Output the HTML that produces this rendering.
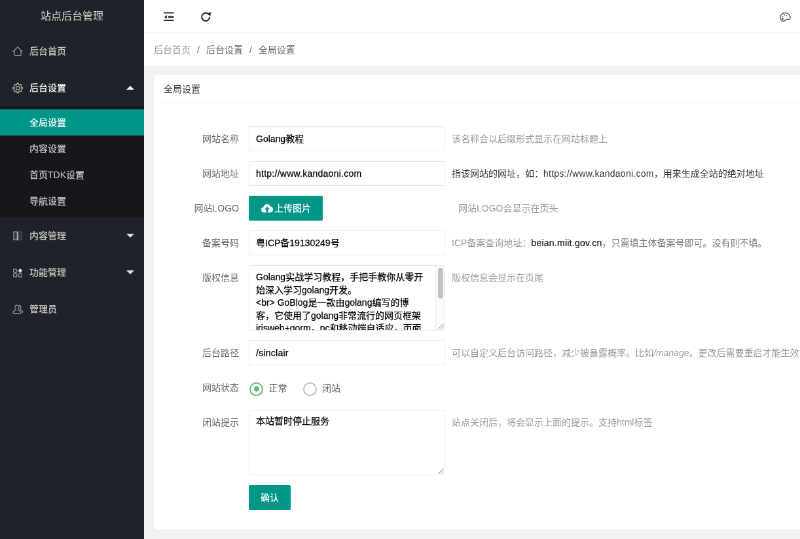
<!DOCTYPE html>
<html lang="zh-CN">
<head>
<meta charset="utf-8">
<title>站点后台管理</title>
<style>
*{box-sizing:border-box;margin:0;padding:0}
html,body{width:800px;height:539px;overflow:hidden;background:#f2f2f2}
body{font-family:"Liberation Sans","Noto Sans CJK SC",sans-serif;font-size:14px;color:#666;line-height:24px}
#app{position:absolute;left:0;top:0;width:1400px;height:824px;transform:scale(0.6547);transform-origin:0 0;background:#f2f2f2;overflow:hidden;will-change:transform}
ul{list-style:none}
.side{position:absolute;left:0;top:0;width:220px;height:824px;background:#20222A;color:#fff;font-weight:500}
.logo{font-weight:400;height:50px;line-height:50px;text-align:center;font-size:16px;color:rgba(255,255,255,.8)}
.nav>li>a{display:block;position:relative;height:56px;line-height:40px;padding:8px 30px 8px 45px;color:rgba(255,255,255,.75);font-size:14px}
.nav>li>a svg.ic{position:absolute;left:18px;top:19px;width:18px;height:18px}
.nav .more{position:absolute;right:15px;top:24.500px;width:0;height:0;border:6px solid transparent;border-top-color:rgba(255,255,255,.85)}
.nav .more.up{top:18.500px;border-top-color:transparent;border-bottom-color:rgba(255,255,255,.95)}
.nav .child{background:rgba(0,0,0,.3);padding:5px 0}
.nav .child a{display:block;height:40px;line-height:40px;padding-left:45px;color:rgba(255,255,255,.75)}
.nav .child a.this{background:#009688;color:#fff}
.nav li.ed>a{color:#fff}
.header{position:absolute;left:220px;top:0;right:0;height:50px;background:#fff;border-bottom:1px solid #f6f6f6}
.header svg{position:absolute}
.crumb{position:absolute;left:220px;right:0;top:50px;height:50px;line-height:50px;padding-left:15px;background:#fff;color:#999;border-top:1px solid #f6f6f6}
.crumb span.sep{margin:0 10px;color:#666}
.crumb .c{color:#666}
.card{position:absolute;left:235px;top:115px;right:-20px;height:694px;background:#fff;border-radius:2px;box-shadow:0 1px 2px 0 rgba(0,0,0,.05)}
.card-h{height:43px;line-height:42px;padding:0 15px;border-bottom:1px solid #f6f6f6;color:#333;font-size:14px}
.form{position:relative;padding:35px 15px 0 15px}
.item{margin-bottom:15px;min-height:38px;position:relative}
.item:after{content:"";display:block;clear:both}
.lab{float:left;width:130px;padding:9px 15px;line-height:20px;text-align:right;color:#666}
.inl{float:left;width:300px;margin-right:10px}
.inp{display:block;width:300px;height:38px;line-height:20px;padding:8px 10px;border:1px solid #e6e6e6;border-radius:2px;background:#fff;color:#000;font-size:14px;overflow:hidden;white-space:nowrap;-webkit-text-stroke:.25px #000}
.ta{height:100px;white-space:normal;line-height:20px;padding:6px 10px;position:relative}
.ta1{padding:8.300px 25px 0 10px;line-height:19.400px}
.ta1 .trk{position:absolute;right:0;top:0;bottom:0;width:14px;background:#fafafa;border-left:1px solid #ebebeb}
.lt{letter-spacing:.25px}
.mid{float:left;padding:9px 0;line-height:20px;color:#999;margin-right:10px;white-space:nowrap}
.mid b{font-weight:normal;color:#111;-webkit-text-stroke:.2px #111}
.btn{font-weight:500;display:inline-block;height:38px;line-height:38px;padding:0 18px;background:#009688;color:#fff;border-radius:2px;font-size:14px;white-space:nowrap;position:relative}
.radio{float:left;height:28px;line-height:28px;margin:6px 11px 0 0;padding-right:10px;position:relative;white-space:nowrap;color:#666}
.radio i{display:inline-block;vertical-align:middle;width:21px;height:21px;border-radius:50%;border:2.200px solid #c2c2c2;margin:0 8.500px 0 1px;position:relative;top:0}
.radio i.on{border-color:#5FB878}
.radio i.on:after{content:"";position:absolute;left:4.700px;top:4.700px;width:8px;height:8px;border-radius:50%;background:#5FB878}
.grip{position:absolute;right:1px;bottom:1px;width:10px;height:10px}
.sb{position:absolute;right:2.500px;top:2.700px;width:7.500px;height:47.500px;border-radius:4px;background:#c1c1c1}
</style>
</head>
<body>
<div id="app">
  <div class="side">
    <div class="logo">站点后台管理</div>
    <ul class="nav">
      <li><a><svg class="ic" viewBox="0 0 18 18" fill="none" stroke="rgba(255,255,255,.55)" stroke-width="1.25" stroke-linejoin="round" stroke-linecap="round"><path d="M2 9.600 9 3l7 6.600M3.900 8.200v6.400a1 1 0 0 0 1 1h8.200a1 1 0 0 0 1-1V8.200"/></svg>后台首页</a></li>
      <li class="ed"><a><svg class="ic" viewBox="0 0 18 18" fill="none" stroke="rgba(255,255,255,.7)" stroke-width="1.15" stroke-linejoin="round"><circle cx="9.100" cy="9.600" r="2.700"/><path d="M8.13 2.36 L10.07 2.36 L10.41 4.15 L12.03 4.83 L13.53 3.80 L14.90 5.17 L13.87 6.67 L14.55 8.29 L16.34 8.63 L16.34 10.57 L14.55 10.91 L13.87 12.53 L14.90 14.03 L13.53 15.40 L12.03 14.37 L10.41 15.05 L10.07 16.84 L8.13 16.84 L7.79 15.05 L6.17 14.37 L4.67 15.40 L3.30 14.03 L4.33 12.53 L3.65 10.91 L1.86 10.57 L1.86 8.63 L3.65 8.29 L4.33 6.67 L3.30 5.17 L4.67 3.80 L6.17 4.83 L7.79 4.15Z"/></svg>后台设置<span class="more up"></span></a>
        <div class="child">
          <a class="this">全局设置</a>
          <a>内容设置</a>
          <a>首页TDK设置</a>
          <a>导航设置</a>
        </div>
      </li>
      <li><a><svg class="ic" viewBox="0 0 18 18" fill="none" stroke="rgba(255,255,255,.5)" stroke-width="1.100"><path d="M3 3.200h5.200v12H3z" stroke="rgba(255,255,255,.55)" stroke-width="1.400"/><path d="M9.800 3.200h5.600v12H9.800zM5 6.200h1.500M5 8.800h1.500M5 11.500h1.500M11.500 6.200h2.300M11.500 8.800h2.300M11.500 11.500h2.300" stroke="rgba(255,255,255,.32)"/><path d="M9 3.500v13" stroke="rgba(255,255,255,.6)" stroke-width="1.300"/></svg>内容管理<span class="more"></span></a></li>
      <li><a><svg class="ic" viewBox="0 0 18 18" fill="none" stroke="rgba(255,255,255,.55)" stroke-width="1.200"><rect x="2.600" y="4.200" width="5" height="5" rx="1"/><rect x="2.600" y="10.900" width="5" height="5" rx="1"/><rect x="10.400" y="10.900" width="5" height="5" rx="1"/><path d="M12.900 3.100 16.300 6.500 12.900 9.900 9.500 6.500z" fill="rgba(255,255,255,.85)" stroke="none"/></svg>功能管理<span class="more"></span></a></li>
      <li><a><svg class="ic" viewBox="0 0 18 18" fill="none" stroke="rgba(255,255,255,.52)" stroke-width="1.200" stroke-linejoin="round" stroke-linecap="round"><path d="M7.800 3.100c1.900 0 3.100 1.400 3.100 3.200 0 1.500-.7 2.500-1.500 3.100v1l3.300 1.700c.7.400 1 .9 1 1.600v1.900H2.100v-1.900c0-.7.300-1.200 1-1.600l3.200-1.700v-1C5.500 8.800 4.800 7.800 4.800 6.300 4.800 4.500 5.900 3.100 7.800 3.100z"/><path d="M11.300 3.400c1.700.2 2.700 1.500 2.700 3.100 0 1.300-.5 2.200-1.200 2.800v.8l3 1.600c.6.300.9.800.9 1.400v1.400"/></svg>管理员</a></li>
    </ul>
  </div>

  <div class="header">
    <svg style="left:29px;top:16px" width="18" height="18" viewBox="0 0 18 18" fill="none" stroke="#222" stroke-width="1.800"><path d="M1.100 3.600h15.400M1.100 15.200h15.400"/><path d="M7.800 9.900h8.700" stroke-width="2.600"/><path d="M5.900 7.300 1.800 9.900l4.100 2.600z" fill="#222" stroke="none"/></svg>
    <svg style="left:85px;top:16px" width="19" height="19" viewBox="0 0 19 19" fill="none" stroke="#222" stroke-width="2"><path d="M15.300 10.100A6.100 6.100 0 1 1 14.200 6.300"/><path d="M17.200 2.800 11.700 4.200 16 9.200z" fill="#222" stroke="none"/></svg>
    <svg style="left:971px;top:18.700px" width="18" height="15" viewBox="0 0 18 15" fill="none" stroke="#333" stroke-width="1.150"><path d="M7.500 .700C11 .700 14 2.300 15.400 5c.9 1.800 1 4-.4 5.300-1.200 1-2.700-.3-4-.1-1.700.3-2.800 3.200-5.800 3.200C2.600 13.400 1 10.500 1 7.500 1 3.500 3.800 .700 7.500 .700z"/><circle cx="4.600" cy="6.100" r=".8" fill="#333" stroke="none"/><circle cx="7.300" cy="3.900" r=".8" fill="#333" stroke="none"/><circle cx="10.700" cy="4.700" r=".8" fill="#333" stroke="none"/><circle cx="4.300" cy="9.900" r="1.300" fill="#222" stroke="none"/></svg>
  </div>
  <div class="crumb">后台首页<span class="sep">/</span><span class="c">后台设置</span><span class="sep">/</span><span class="c">全局设置</span></div>

  <div class="card">
    <div class="card-h">全局设置</div>
    <div class="form">
      <div class="item"><div class="lab">网站名称</div><div class="inl"><div class="inp">Golang教程</div></div><div class="mid">该名称会以后缀形式显示在网站标题上</div></div>
      <div class="item"><div class="lab">网站地址</div><div class="inl"><div class="inp lt">http://www.kandaoni.com</div></div><div class="mid" style="color:#333">指该网站的网址，如：<span class="lt">https://www.kandaoni.com</span>，用来生成全站的绝对地址</div></div>
      <div class="item"><div class="lab">网站LOGO</div><div class="inl"><div class="btn"><svg style="vertical-align:middle;margin:-3px 1px 0 0" width="20" height="16" viewBox="0 0 20 16"><path d="M5 14.500a4 4 0 0 1-.6-7.950A5.500 5.500 0 0 1 15 5.600a4.500 4.500 0 0 1 .3 8.900z" fill="#fff"/><path d="M10 5.600 14 10h-2.500v4.600h-3V10H6z" fill="#009688"/></svg>上传图片</div></div><div class="mid" style="margin-left:10px">网站LOGO会显示在页头</div></div>
      <div class="item"><div class="lab">备案号码</div><div class="inl"><div class="inp">粤ICP备19130249号</div></div><div class="mid">ICP备案查询地址：<b class="lt">beian.miit.gov.cn</b><span style="color:#777">，只需填主体备案号即可。没有则不填。</span></div></div>
      <div class="item"><div class="lab">版权信息</div><div class="inl"><div class="inp ta ta1">Golang实战学习教程，手把手教你从零开始深入学习golang开发。<br>&lt;br&gt; GoBlog是一款由golang编写的博<br>客，它使用了golang非常流行的网页框架<br>irisweb+gorm，pc和移动端自适应，页面<i class="trk"></i><i class="sb"></i><svg class="grip" viewBox="0 0 10 10" stroke="#777" stroke-width="1"><path d="M9.500 1.500 1.500 9.500M9.500 5.500 5.500 9.500"/></svg></div></div><div class="mid">版权信息会显示在页尾</div></div>
      <div class="item"><div class="lab">后台路径</div><div class="inl"><div class="inp lt">/sinclair</div></div><div class="mid">可以自定义后台访问路径，减少被暴露概率。比如<em>/manage</em>。更改后需要重启才能生效</div></div>
      <div class="item"><div class="lab">网站状态</div><div class="radio"><i class="on"></i>正常</div><div class="radio" style="margin-left:2px"><i></i>闭站</div></div>
      <div class="item"><div class="lab">闭站提示</div><div class="inl"><div class="inp ta">本站暂时停止服务<svg class="grip" viewBox="0 0 10 10" stroke="#777" stroke-width="1"><path d="M9.500 1.500 1.500 9.500M9.500 5.500 5.500 9.500"/></svg></div></div><div class="mid">站点关闭后，将会显示上面的提示。支持html标签</div></div>
      <div class="item"><div style="margin-left:130px"><div class="btn" style="padding:0 18px">确认</div></div></div>
    </div>
  </div>
</div>
</body>
</html>
